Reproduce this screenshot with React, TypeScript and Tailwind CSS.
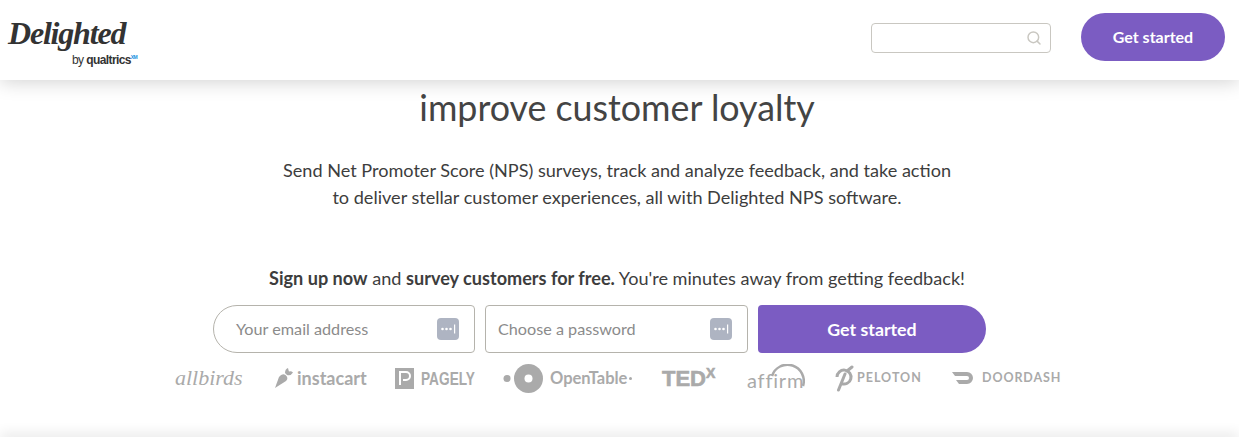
import { Search } from "lucide-react";

const font = { fontFamily: "Lato, 'Open Sans', sans-serif" };

function KeyIcon() {
  return (
    <svg width="22" height="22" viewBox="0 0 22 22" className="shrink-0">
      <rect width="22" height="22" rx="4" fill="#aeb4c2" />
      <circle cx="5.5" cy="11" r="1.3" fill="#fff" />
      <circle cx="9.5" cy="11" r="1.3" fill="#fff" />
      <circle cx="13.5" cy="11" r="1.3" fill="#fff" />
      <rect x="17" y="6.5" width="1.2" height="9" fill="#fff" />
    </svg>
  );
}

function Header() {
  return (
    <header className="absolute inset-x-0 top-0 z-10 flex h-20 items-center justify-between bg-white pb-[6px] pl-2 pr-[14px] shadow-[0_2px_18px_rgba(0,0,0,0.18)]">
      <div className="relative h-[64px] w-[140px] text-[#333]">
        <span className="absolute left-0 top-[14px] font-['Liberation_Serif',serif] text-[32px] font-bold italic leading-[28px] tracking-[-1.2px]">
          Delighted
        </span>
        <span className="absolute left-[64px] top-[47px] whitespace-nowrap font-['Liberation_Sans',sans-serif] text-[12px] leading-[10px] tracking-[-0.6px]">
          by <span className="font-bold">qualtrics</span>
          <span className="align-super text-[5px] font-bold text-[#1a8fe0]">XM</span>
        </span>
      </div>
      <div className="flex items-center gap-[30px]">
        <div className="mt-[2px] flex h-[30px] w-[180px] items-center justify-end rounded border border-[#c9c7c1] bg-white pr-[8px]">
          <Search size={16} strokeWidth={2.2} className="text-[#c9c7c1]" />
        </div>
        <button className="h-12 w-36 rounded-3xl bg-[#7b5cc2] text-[16px] font-bold text-white">
          Get started
        </button>
      </div>
    </header>
  );
}

function LogoRow() {
  return (
    <div className="mt-[7px] flex h-[36px] items-center justify-center gap-[30px] whitespace-nowrap text-left text-[#aaa]">
      <span className="w-[70px] font-['Liberation_Serif',serif] text-[22px] italic leading-none">allbirds</span>
      <span className="flex w-[90px] items-center gap-[4px] text-[18px] font-bold leading-none">
        <svg width="18" height="20" viewBox="0 0 18 20" className="shrink-0">
          <path d="M0 20 L4 9 Q7 5 10.5 7 Q14 10 11 13 Z" fill="#aaa" />
          <path d="M10 5 Q10 1 13 0 Q13.5 2.5 14 3.5 Q16 2.5 18 4.5 Q16 8 12 7 Z" fill="#aaa" />
        </svg>
        instacart
      </span>
      <span className="flex w-[78px] items-center gap-[7px] font-['Liberation_Sans',sans-serif] text-[19px] font-bold leading-none">
        <svg width="19" height="21" viewBox="0 0 19 21" className="shrink-0">
          <rect width="19" height="21" fill="#aaa" />
          <path d="M5 17V4h6a4 4 0 0 1 0 8H8" fill="none" stroke="#fff" strokeWidth="2" />
        </svg>
        <span className="origin-left scale-x-[0.72]">PAGELY</span>
      </span>
      <span className="flex w-[129px] items-center text-[16.5px] font-bold leading-none">
        <svg width="40" height="29" viewBox="0 0 40 29" className="mr-[7px] shrink-0">
          <circle cx="4" cy="14.5" r="3.5" fill="#aaa" />
          <circle cx="25.5" cy="14.5" r="14.5" fill="#aaa" />
          <circle cx="25.5" cy="14.5" r="4" fill="#fff" />
        </svg>
        OpenTable
        <span className="ml-[2px] h-[3px] w-[3px] rounded-full bg-[#aaa]" />
      </span>
      <span className="w-[55px] font-['Liberation_Sans',sans-serif] text-[22px] font-bold leading-none [-webkit-text-stroke:0.6px_#aaa]">
        TED<span className="align-super text-[14px] leading-none">X</span>
      </span>
      <span className="relative w-[57px] pt-[4px] text-[20px] leading-[20px] tracking-[0.8px]">
        affirm
        <svg width="36" height="24" viewBox="0 0 36 24" className="absolute left-[22px] top-[-2px]">
          <path d="M3 12 A 15 15 0 0 1 34 22" fill="none" stroke="#aaa" strokeWidth="2.5" />
        </svg>
      </span>
      <span className="flex w-[88px] items-center gap-[3px] text-[12.5px] font-bold leading-none tracking-[1px]">
        <svg width="20" height="27" viewBox="0 0 20 27" className="shrink-0">
          <path d="M3 12 A7 7 0 1 1 7.5 18.6" fill="none" stroke="#aaa" strokeWidth="3" />
          <path d="M4.5 25 L11 9 M13 6 L18 2" fill="none" stroke="#aaa" strokeWidth="3" strokeLinecap="round" />
        </svg>
        PELOTON
      </span>
      <span className="flex w-[107px] items-center gap-[7px] text-[12.5px] font-bold leading-none tracking-[0.9px]">
        <svg width="23" height="12" viewBox="0 0 23 12" className="shrink-0">
          <path d="M0 0 H15 A6 6 0 0 1 15 12 H7 L4 8 H15 A2 2 0 0 0 15 4 H3 Z" fill="#aaa" />
        </svg>
        DOORDASH
      </span>
    </div>
  );
}

export default function App() {
  return (
    <div className="relative h-[442px] w-full overflow-hidden bg-white text-[#3d3d3d]" style={font}>
      <Header />
      <main className="h-[437px] pr-[5px] text-center">
        <h1 className="whitespace-nowrap pt-[46px] text-[35.8px] font-normal leading-[41px] text-[#444]">
          Use the Net Promoter Score to measure and
          <br />
          improve customer loyalty
        </h1>
        <p className="mt-[29px] text-[18.1px] leading-[27px]">
          Send Net Promoter Score (NPS) surveys, track and analyze feedback, and take action
          <br />
          to deliver stellar customer experiences, all with Delighted NPS software.
        </p>
        <p className="mt-[54px] text-[18.1px] leading-[27px]">
          <strong>Sign up now</strong> and <strong>survey customers for free.</strong> You're minutes away from getting feedback!
        </p>
        <form className="mx-auto mt-[13px] flex h-12 w-[808px] gap-[10px] text-left text-[16.2px]">
          <div className="flex w-[262px] items-center justify-between rounded-l-3xl rounded-r border border-[#b5b3ac] pl-[22px] pr-[15px] text-[#8b8b8b]">
            Your email address
            <KeyIcon />
          </div>
          <div className="flex w-[263px] items-center justify-between rounded border border-[#b5b3ac] pl-3 pr-[15px] text-[#8b8b8b]">
            Choose a password
            <KeyIcon />
          </div>
          <button type="button" className="w-[228px] rounded-l rounded-r-3xl bg-[#7b5cc2] text-center text-[17.8px] font-bold text-white">
            Get started
          </button>
        </form>
        <LogoRow />
      </main>
      <div className="relative h-[5px] bg-white shadow-[0_-1px_14px_rgba(0,0,0,0.2)]" />
    </div>
  );
}
